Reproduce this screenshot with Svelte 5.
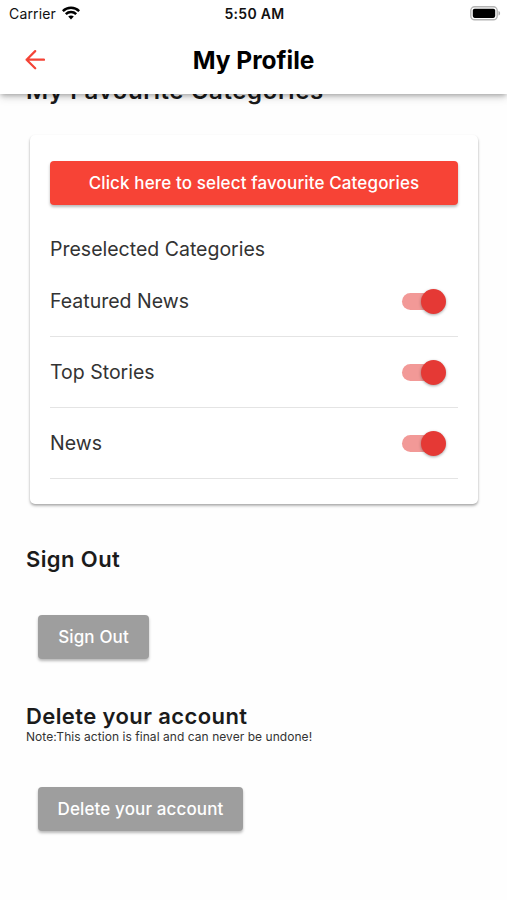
<script>
  let categories = $state([
    { name: 'Featured News', on: true },
    { name: 'Top Stories', on: true },
    { name: 'News', on: true }
  ]);
</script>

<div class="screen">
  <header>
    <div class="status">
      <div class="carrier">
        <span>Carrier</span>
        <svg width="18" height="14" viewBox="0 0 18 14" fill="none" stroke="#000" stroke-width="2.5">
          <path d="M.8 5.1C5.3.6 12.7.6 17.2 5.1" />
          <path d="M3.8 8.2c2.9-2.8 7.5-2.8 10.4 0" />
          <path d="M6.2 10.6c1.6-1.5 4-1.5 5.6 0L9 13.5z" fill="#000" stroke="none" />
        </svg>
      </div>
      <span class="time">5:50 AM</span>
      <svg class="battery" width="31" height="15" viewBox="0 0 31 15">
        <rect x=".8" y=".8" width="26.4" height="13" rx="3.8" fill="#fff" stroke="#b4b4b4" stroke-width="1.4" />
        <rect x="2.8" y="2.7" width="22.4" height="9.2" rx="1.8" fill="#000" />
        <path d="M28.5 5v4.6c2.2-.7 2.2-3.9 0-4.6z" fill="#aaa" />
      </svg>
    </div>
    <div class="bar">
      <button class="back" aria-label="Back">
        <svg width="20" height="20" viewBox="0 0 20 20" fill="none" stroke="#f44336" stroke-width="2.2" stroke-linecap="round" stroke-linejoin="round">
          <path d="M19 9.7H1.6M10.2 1.1L1.6 9.7l8.6 8.6" />
        </svg>
      </button>
      <h1>My Profile</h1>
    </div>
  </header>

  <main>
    <h2 class="fav">My Favourite Categories</h2>
    <section class="card">
      <button class="btn primary">Click here to select favourite Categories</button>
      <p class="label">Preselected Categories</p>
      {#each categories as category}
        <div class="row">
          <span>{category.name}</span>
          <button
            class="switch"
            class:on={category.on}
            role="switch"
            aria-checked={category.on}
            aria-label={category.name}
            onclick={() => (category.on = !category.on)}
          ><i></i></button>
        </div>
      {/each}
    </section>

    <h2 class="out">Sign Out</h2>
    <button class="btn grey signout">Sign Out</button>

    <h2 class="del">Delete your account</h2>
    <p class="note">Note:This action is final and can never be undone!</p>
    <button class="btn grey delete">Delete your account</button>
  </main>
</div>

<style>
  :global(body) {
    margin: 0;
    background: #fff;
  }
  .screen {
    width: 507px;
    height: 900px;
    overflow: hidden;
    display: flex;
    flex-direction: column;
    background: #fefefe;
    color: #212121;
    font-family: Inter, Roboto, sans-serif;
  }
  button {
    border: 0;
    padding: 0;
    font-family: inherit;
    background: none;
  }
  h1, h2, p {
    margin: 0;
    white-space: nowrap;
  }
  header {
    height: 94px;
    flex: none;
    position: relative;
    z-index: 1;
    background: #fff;
    box-shadow: 0 2px 5px -1px rgba(0, 0, 0, 0.3), 0 4px 8px rgba(0, 0, 0, 0.13);
  }
  .status {
    height: 27px;
    display: grid;
    grid-template-columns: 1fr auto 1fr;
    align-items: center;
    padding: 0 7px 0 9px;
    color: #111;
    font-size: 14px;
  }
  .carrier {
    display: flex;
    align-items: center;
    gap: 6px;
    letter-spacing: 0.15px;
  }
  .carrier svg {
    margin-top: -2px;
  }
  .time {
    font-weight: 600;
    font-size: 14px;
    letter-spacing: 0.3px;
  }
  .battery {
    justify-self: end;
    margin-right: -1px;
  }
  .bar {
    height: 66px;
    display: grid;
    grid-template-columns: 1fr auto 1fr;
    align-items: center;
    padding: 0 25px;
  }
  .back {
    width: 20px;
    height: 20px;
    display: flex;
  }
  h1 {
    color: #000;
    font-size: 24.5px;
    font-weight: 700;
    line-height: 30px;
    letter-spacing: 0;
  }
  main {
    display: flex;
    flex-direction: column;
    align-items: flex-start;
    padding: 0 26px;
  }
  h2 {
    font-size: 22px;
    font-weight: 600;
    line-height: 28px;
    letter-spacing: 0.4px;
    color: #1b1b1b;
  }
  .fav {
    margin-top: -17px;
    font-size: 24px;
    letter-spacing: 0.6px;
  }
  .card {
    width: 448px;
    height: 369px;
    box-sizing: border-box;
    margin: 30px 0 0 4px;
    padding: 26px 20px 0;
    border-radius: 5px;
    background: #fff;
    box-shadow: 0 2px 3px rgba(0, 0, 0, 0.26), 0 1px 2px rgba(0, 0, 0, 0.12);
  }
  .btn {
    height: 44px;
    border-radius: 4px;
    color: #fff;
    font-size: 17px;
    font-weight: 500;
    letter-spacing: 0.13px;
    white-space: nowrap;
    box-shadow: 0 2px 3px rgba(0, 0, 0, 0.28);
  }
  .primary {
    width: 100%;
    background: #f74336;
  }
  .grey {
    margin-left: 12px;
    background: #9e9e9e;
  }
  .label {
    margin-top: 31px;
    font-size: 19.5px;
    line-height: 26px;
    letter-spacing: 0;
    color: #333;
  }
  .row {
    height: 70px;
    display: flex;
    align-items: center;
    justify-content: space-between;
    padding-right: 12px;
    border-bottom: 1px solid #e4e4e4;
    font-size: 19.5px;
    letter-spacing: 0;
    color: #333;
  }
  .label + .row {
    margin-top: 4px;
  }
  .switch {
    width: 44px;
    height: 25px;
    display: flex;
    align-items: center;
    position: relative;
  }
  .switch::before {
    content: '';
    width: 42px;
    height: 17px;
    border-radius: 9px;
    background: #bbb;
  }
  .switch i {
    position: absolute;
    left: 0;
    width: 25px;
    height: 25px;
    border-radius: 50%;
    background: #fafafa;
    box-shadow: 0 1px 3px rgba(0, 0, 0, 0.35);
  }
  .switch.on::before {
    background: #f29997;
  }
  .switch.on i {
    left: 19px;
    background: #e53935;
  }
  .out {
    margin-top: 41px;
  }
  .signout {
    width: 111px;
    margin-top: 42px;
  }
  .del {
    margin-top: 43px;
  }
  .note {
    font-size: 12px;
    line-height: 14px;
    letter-spacing: 0.05px;
    color: #333;
  }
  .delete {
    width: 205px;
    margin-top: 43px;
  }
</style>
